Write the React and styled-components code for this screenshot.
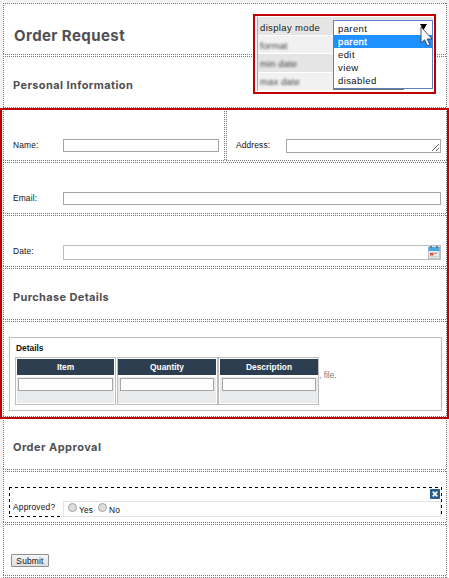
import React from "react";
import styled, { createGlobalStyle } from "styled-components";

const Global = createGlobalStyle`
  *, *::before, *::after { box-sizing: border-box; }
  html { background: #fff; }
  body { margin: 0; overflow: hidden; font-family: "Liberation Sans", Arial, sans-serif; font-size: 8.4px; color: #111; }
`;

const Page = styled.main`
  position: relative;
  width: 449px;
  height: 578px;
  padding: 3px 2px 0 3px;
  overflow: hidden;
  background: linear-gradient(#f4f3f2 0 528px, #fff 528px);
`;

const Form = styled.div`
  display: flex;
  flex-direction: column;
  gap: 1px;
  width: 444px;
  background: #fff;
`;

const Split = styled.div`
  display: grid;
  grid-template-columns: 222px 221px;
  gap: 1px;
`;

const dots = (dir) =>
  `repeating-linear-gradient(${dir}, #777 0 1px, transparent 1px 2px)`;

const Cell = styled.section`
  height: ${(p) => p.$height || 52}px;
  padding: ${(p) => p.$pad || "0"};
  background:
    ${dots("90deg")} 0 0 / 100% 1px no-repeat,
    ${dots("90deg")} 0 100% / 100% 1px no-repeat,
    ${dots("180deg")} 0 0 / 1px 100% no-repeat,
    ${dots("180deg")} 100% 0 / 1px 100% no-repeat,
    #fff;
`;

const Title = styled.h1`
  margin: 0;
  font: 700 15px/20px Inter, sans-serif;
  letter-spacing: 0.42px;
  color: #505052;
  white-space: nowrap;
`;

const Heading = styled.h2`
  margin: 0;
  font: 700 11px/14px Inter, sans-serif;
  letter-spacing: ${(p) => p.$spacing}px;
  color: #505052;
  white-space: nowrap;
`;

const Field = styled.label`
  display: flex;
  align-items: flex-start;
`;

const Label = styled.span`
  flex: none;
  width: 50px;
  padding-top: 1px;
  font-size: 8.4px;
  line-height: 10px;
  letter-spacing: ${(p) => p.$spacing || 0.15}px;
  white-space: nowrap;
`;

const Input = styled.input`
  display: block;
  width: ${(p) => p.$width}px;
  height: 13px;
  margin: 0;
  padding: 0 2px;
  border: 1px solid #a6a6a6;
  border-radius: 0;
  background: #fff;
  font: 8px "Liberation Sans", sans-serif;
  outline: 0;
`;

const AreaBox = styled.span`
  display: flex;
  align-items: flex-end;
  justify-content: flex-end;
  width: 155px;
  height: 14px;
  padding: 1px;
  border: 1px solid #a6a6a6;
`;

const DateBox = styled.span`
  display: flex;
  align-items: flex-start;
  justify-content: flex-end;
  width: 378px;
  height: 15px;
  border: 1px solid #bcbcbc;
`;

const DetailsBox = styled.div`
  width: 433px;
  height: 74px;
  padding: 5px 0 0 5px;
  border: 1px solid #bdbdbd;
`;

const Legend = styled.div`
  height: 14px;
  padding-left: 1px;
  font-size: 8.4px;
  font-weight: bold;
  line-height: 10px;
`;

const TableRow = styled.div`
  display: flex;
  align-items: flex-start;
`;

const Column = styled.div`
  width: 101px;
  height: 48px;
  margin-right: ${(p) => p.$gap || 0}px;
  padding: 1px ${(p) => p.$right}px 1px ${(p) => p.$left}px;
  border: 1px solid #bdbdbd;
`;

const ColumnHead = styled.div`
  height: 16px;
  background: #2c3e50;
  color: #fff;
  font-size: 8.4px;
  font-weight: bold;
  line-height: 17px;
  text-align: center;
`;

const ColumnBody = styled.div`
  height: 26px;
  margin-top: 2px;
  padding: 1px 0 0 ${(p) => p.$inset}px;
  background: #e9eaeb;
`;

const FileNote = styled.span`
  padding: 13px 0 0 0;
  font-size: 8.4px;
  line-height: 10px;
  color: #6f7d8a;
`;

const Selected = styled.div`
  width: 433px;
  height: 30px;
  background:
    repeating-linear-gradient(90deg, #000 0 3px, transparent 3px 6px) 0 0 / 100% 1px no-repeat,
    repeating-linear-gradient(90deg, #000 0 3px, transparent 3px 6px) 0 100% / 54px 1px no-repeat,
    repeating-linear-gradient(180deg, #000 0 3px, transparent 3px 6px) 0 0 / 1px 100% no-repeat,
    repeating-linear-gradient(180deg, #000 0 3px, transparent 3px 6px) 100% 0 / 1px 100% no-repeat;
`;

const SelectedTop = styled.div`
  display: flex;
  justify-content: flex-end;
  height: 14px;
  padding: 2px 2px 0 0;
`;

const ApprovalRow = styled.div`
  display: flex;
  padding-left: 4px;
`;

const Choices = styled.div`
  display: flex;
  width: 378px;
  height: 16px;
  padding: 1px 0 0 4px;
  border: 1px solid #e4e4e4;
`;

const Choice = styled.label`
  display: flex;
  align-items: flex-start;
  width: 30px;
  font-size: 8.4px;
  letter-spacing: 0.2px;
  line-height: 10px;
`;

const Radio = styled.span`
  width: 9px;
  height: 9px;
  margin-right: 2px;
  border: 1px solid #a2a2a2;
  border-radius: 50%;
  background: #dedede;
`;

const ChoiceText = styled.span`
  padding-top: 2px;
`;

const Submit = styled.button`
  display: block;
  width: 38px;
  height: 13px;
  margin: 0;
  padding: 0;
  border: 1px solid #8f8f8f;
  border-radius: 1px;
  background: linear-gradient(#f6f6f6, #dedede);
  color: #111;
  font: 8.4px/10px "Liberation Sans", sans-serif;
  letter-spacing: 0.2px;
`;

const FieldsOutline = styled.div`
  position: absolute;
  left: 0;
  top: 108px;
  width: 449px;
  height: 311px;
  border: 2px solid #c00000;
  pointer-events: none;
`;

const Properties = styled.aside`
  position: absolute;
  left: 253px;
  top: 14px;
  display: flex;
  width: 183px;
  height: 80px;
  padding: 1px 1px 0 2px;
  border: 2px solid #c00000;
  background: #fff;
`;

const PropertyNames = styled.div`
  width: 76px;
  height: 74px;
  border-left: 1px solid #aaa;
`;

const PropertyName = styled.div`
  height: ${(p) => p.$height}px;
  padding: ${(p) => p.$top}px 0 0 2px;
  border-bottom: 1px solid #fff;
  background: ${(p) => (p.$dark ? "#e5e5e5" : "#f1f1f1")};
  font-size: 9.5px;
  line-height: 11px;
  white-space: nowrap;
`;

const NameText = styled.span`
  display: inline-block;
  color: ${(p) => (p.$blur ? "#444" : "#1a1a1a")};
  letter-spacing: ${(p) => (p.$blur ? 0.1 : 0.35)}px;
  filter: ${(p) => (p.$blur ? "blur(0.8px)" : "none")};
`;

const SelectColumn = styled.div`
  width: 100px;
  padding-top: 3px;
  background: linear-gradient(#e5e5e5 0 3px, transparent 3px);
`;

const SelectValue = styled.div`
  height: 15px;
  padding: 2px 0 0 4px;
  border: 1px solid #5c82c9;
  border-bottom: 0;
  color: #111;
  font-size: 9.5px;
  line-height: 11px;
  letter-spacing: 0.4px;
`;

const Options = styled.div`
  height: 54px;
  border: 1px solid #5c7fbf;
  border-top: 0;
  background: #fff;
`;

const Option = styled.div`
  height: 13px;
  padding: 1px 0 0 4px;
  background: ${(p) => (p.$active ? "#1e90ff" : "transparent")};
  color: ${(p) => (p.$active ? "#fff" : "#111")};
  font-size: 9.5px;
  line-height: 12px;
  letter-spacing: 0.4px;
  -webkit-text-stroke: ${(p) => (p.$active ? "0.3px #fff" : "0")};
`;

const FieldEdge = styled.div`
  width: 71px;
  height: 1px;
  background: #777;
`;

const Cursor = styled.svg`
  position: absolute;
  left: 165px;
  top: 8px;
  overflow: visible;
`;

const Calendar = () => (
  <svg width="12" height="13" viewBox="0 0 12 13">
    <rect x=".5" y="1" width="11" height="11.5" fill="#e6ebee" stroke="#a9b8c3" strokeWidth=".8" />
    <rect x=".5" y="1" width="11" height="4" fill="#4aa9e0" />
    <path d="M3 0v2M9 0v2" stroke="#667d8c" strokeWidth="2" />
    <path d="M2 6.5h8M2 10.5h8" stroke="#ccd3d8" />
    <rect x="2" y="7" width="3.5" height="2.5" fill="#d9503f" />
    <path d="M6 7.5h3" stroke="#dd8c82" />
  </svg>
);

const columns = [
  { name: "Item", left: 1, right: 1, gap: 1, inset: 1, input: 95 },
  { name: "Quantity", left: 0, right: 1, gap: 0, inset: 2, input: 94 },
  { name: "Description", left: 1, right: 0, gap: 0, inset: 2, input: 94 },
];

export default function App() {
  return (
    <>
      <Global />
      <Page>
        <Form>
          <Cell $pad="23px 0 0 11px"><Title>Order Request</Title></Cell>
          <Cell $pad="22px 0 0 10px"><Heading $spacing={0.4}>Personal Information</Heading></Cell>
          <Split>
            <Cell $pad="30px 0 0 10px">
              <Field><Label>Name:</Label><Input $width={156} /></Field>
            </Cell>
            <Cell $pad="30px 0 0 10px">
              <Field>
                <Label>Address:</Label>
                <AreaBox>
                  <svg width="7" height="7" viewBox="0 0 7 7">
                    <path d="M0 7L7 0M4 7L7 4" stroke="#555" strokeWidth=".9" />
                  </svg>
                </AreaBox>
              </Field>
            </Cell>
          </Split>
          <Cell $pad="30px 0 0 10px">
            <Field><Label>Email:</Label><Input $width={378} /></Field>
          </Cell>
          <Cell $pad="30px 0 0 10px">
            <Field><Label>Date:</Label><DateBox><Calendar /></DateBox></Field>
          </Cell>
          <Cell $pad="22px 0 0 10px"><Heading $spacing={0.36}>Purchase Details</Heading></Cell>
          <Cell $height={96} $pad="16px 0 0 6px">
            <DetailsBox>
              <Legend>Details</Legend>
              <TableRow>
                {columns.map((c) => (
                  <Column key={c.name} $left={c.left} $right={c.right} $gap={c.gap}>
                    <ColumnHead>{c.name}</ColumnHead>
                    <ColumnBody $inset={c.inset}><Input $width={c.input} /></ColumnBody>
                  </Column>
                ))}
                <FileNote>, file.</FileNote>
              </TableRow>
            </DetailsBox>
          </Cell>
          <Cell $pad="22px 0 0 10px"><Heading $spacing={0.46}>Order Approval</Heading></Cell>
          <Cell $pad="16px 0 0 6px">
            <Selected>
              <SelectedTop>
                <svg width="10" height="10" viewBox="0 0 10 10">
                  <rect width="10" height="10" rx="1" fill="#245d8c" />
                  <path d="M2.7 2.7l4.6 4.6M7.3 2.7L2.7 7.3" stroke="#fff" strokeWidth="1.7" />
                </svg>
              </SelectedTop>
              <ApprovalRow>
                <Label $spacing={0.2}>Approved?</Label>
                <Choices>
                  <Choice><Radio /><ChoiceText>Yes</ChoiceText></Choice>
                  <Choice><Radio /><ChoiceText>No</ChoiceText></Choice>
                </Choices>
              </ApprovalRow>
            </Selected>
          </Cell>
          <Cell $pad="30px 0 0 8px"><Submit>Submit</Submit></Cell>
          <Cell />
        </Form>
        <FieldsOutline />
        <Properties>
          <PropertyNames>
            <PropertyName $dark $height={19} $top={5}><NameText>display mode</NameText></PropertyName>
            <PropertyName $height={18} $top={4}><NameText $blur>format</NameText></PropertyName>
            <PropertyName $dark $height={19} $top={4}><NameText $blur>min date</NameText></PropertyName>
            <PropertyName $height={18} $top={3}><NameText $blur>max date</NameText></PropertyName>
          </PropertyNames>
          <SelectColumn>
            <SelectValue>parent</SelectValue>
            <Options>
              <Option $active>parent</Option>
              <Option>edit</Option>
              <Option>view</Option>
              <Option>disabled</Option>
            </Options>
            <FieldEdge />
          </SelectColumn>
          <Cursor width="13" height="23" viewBox="0 0 13 23">
            <path d="M0 0h7L3.5 6z" fill="#000" />
            <path d="M1 3v16l3.6-3.2 2.7 6 2.6-1.2-2.7-5.6H12.2z" fill="#fff" stroke="#2b3a5c" strokeWidth=".9" />
          </Cursor>
        </Properties>
      </Page>
    </>
  );
}
